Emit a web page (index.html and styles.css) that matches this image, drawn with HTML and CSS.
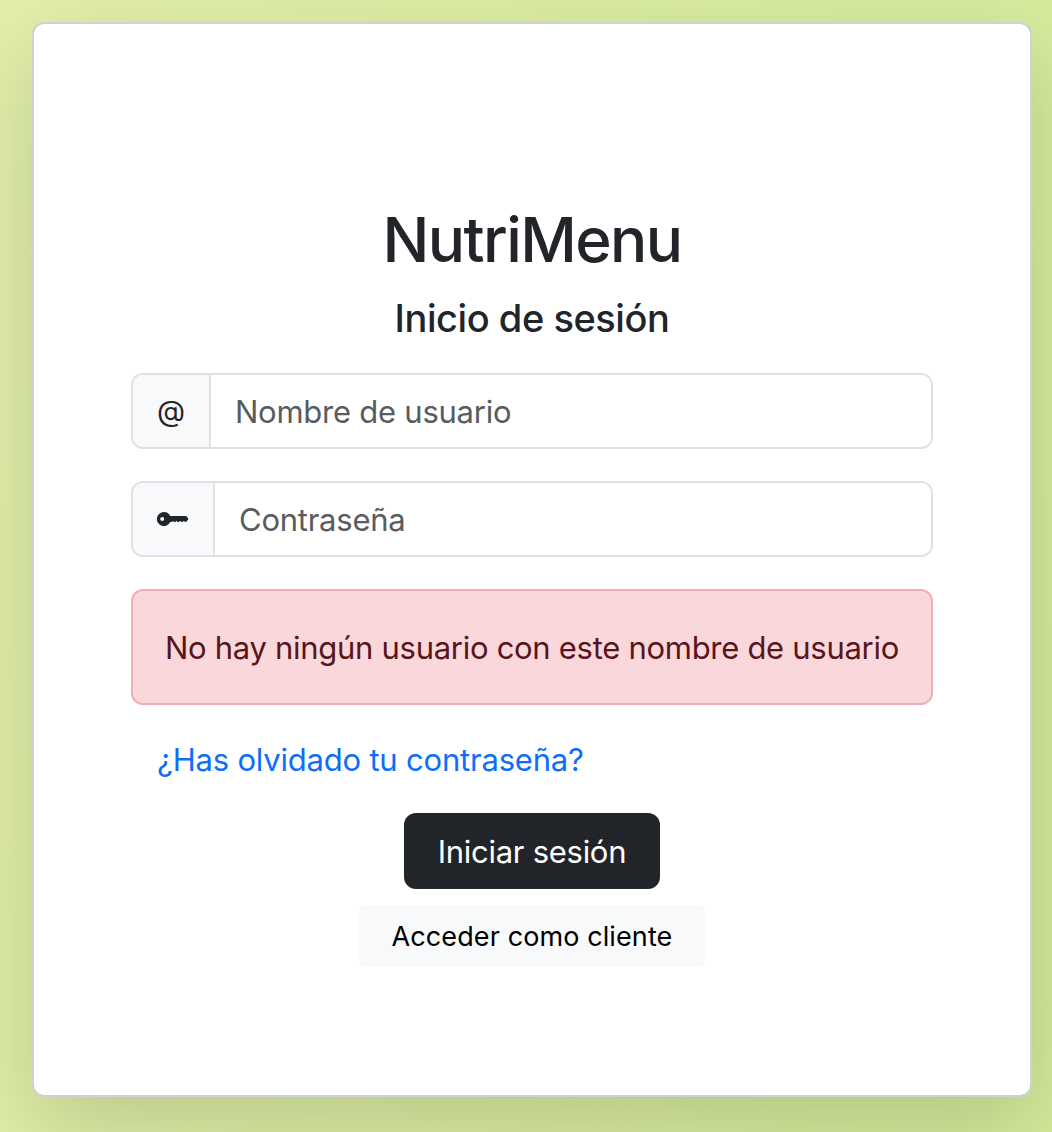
FILE: index.html
```html
<!DOCTYPE html>
<html lang="es">
<head>
<meta charset="utf-8">
<title>NutriMenu</title>
<link rel="stylesheet" href="styles.css">
</head>
<body>
<main class="card">
  <h1 class="brand">NutriMenu</h1>
  <h2 class="subtitle">Inicio de sesión</h2>
  <form class="form">
    <div class="input-group">
      <span class="addon addon-user">@</span>
      <input class="control control-user" type="text" placeholder="Nombre de usuario">
    </div>
    <div class="input-group">
      <span class="addon addon-key">
        <svg class="key" viewBox="0 0 32 16" aria-hidden="true">
          <path fill-rule="evenodd" d="M7 1a7 7 0 0 1 6.200 4H28.500q.8 0 1.300.6L31 7.200q.5.800 0 1.600L29.800 10.300Q29.300 11 28.400 11L26.800 9.900 25 11.300 23.200 9.900 21.400 11.300 19.600 9.900 17.800 11.300 16 10.200 14.600 11H13.200A7 7 0 1 1 7 1ZM5.200 6a2 2 0 1 0 0 4 2 2 0 0 0 0-4Z"/>
        </svg>
      </span>
      <input class="control control-pass" type="password" placeholder="Contraseña">
    </div>
    <div class="alert" role="alert">No hay ningún usuario con este nombre de usuario</div>
    <a class="forgot" href="#">¿Has olvidado tu contraseña?</a>
    <button class="btn btn-dark" type="button">Iniciar sesión</button>
    <button class="btn btn-light" type="button">Acceder como cliente</button>
  </form>
</main>
</body>
</html>
```
FILE: styles.css
```css
* { box-sizing: border-box; }

body {
  margin: 0;
  height: 1132px;
  padding: 22px 20px 35px 32px;
  overflow: hidden;
  background: linear-gradient(100deg, #e3f0ab 0%, #d3eb9a 100%);
  color: #212529;
  font-family: Inter, "Liberation Sans", sans-serif;
  font-size: 31px;
  line-height: 48px;
}

.card {
  height: 1075px;
  padding: 178px 97px 0;
  background: #fff;
  background-clip: padding-box;
  border: 2px solid #d0d1d2;
  border-radius: 12px;
  box-shadow: 0 32px 96px rgba(0, 0, 0, .165);
}

.brand,
.subtitle {
  margin: 0;
  font-weight: 500;
  text-align: center;
}

.brand {
  font-size: 62px;
  line-height: 76px;
  letter-spacing: -1.6px;
}

.subtitle {
  margin-top: 16px;
  font-size: 38px;
  line-height: 48px;
  letter-spacing: -.45px;
}

.form {
  display: flex;
  flex-direction: column;
  align-items: center;
  margin-top: 31px;
}

.input-group {
  display: flex;
  width: 802px;
  height: 76px;
  margin-bottom: 32px;
  border: 2px solid #dee2e6;
  border-radius: 12px;
  overflow: hidden;
}

.addon {
  display: flex;
  flex: none;
  align-items: center;
  justify-content: center;
  background: #f8f9fa;
  border-right: 2px solid #dee2e6;
}

.addon-user { width: 78px; font-size: 29px; }
.addon-key { width: 82px; }

.key {
  width: 32px;
  height: 16px;
  fill: #212529;
}

.control {
  flex: 1;
  min-width: 0;
  padding: 2px 24px 0;
  border: 0;
  background: #fff;
  font: inherit;
  letter-spacing: -.25px;
}

.control::placeholder { color: #595c5f; opacity: 1; }

.alert {
  width: 802px;
  height: 116px;
  padding: 33px 0 0;
  background: #fad7da;
  border: 2px solid #f1aeb5;
  border-radius: 12px;
  color: #58151c;
  text-align: center;
  white-space: nowrap;
  letter-spacing: -.29px;
}

.forgot {
  align-self: flex-start;
  margin: 31px 0 29px 26px;
  color: #0d6efd;
  text-decoration: none;
  letter-spacing: -.2px;
}

.btn {
  padding: 2px 0 0;
  border: 0;
  font: inherit;
  white-space: nowrap;
}

.btn-dark {
  width: 256px;
  height: 76px;
  border-radius: 12px;
  background: #212529;
  color: #fff;
  letter-spacing: -.28px;
}

.btn-light {
  width: 348px;
  height: 62px;
  margin-top: 16px;
  border-radius: 8px;
  background: #f8f9fa;
  color: #000;
  font-size: 27px;
  letter-spacing: .1px;
}
```
